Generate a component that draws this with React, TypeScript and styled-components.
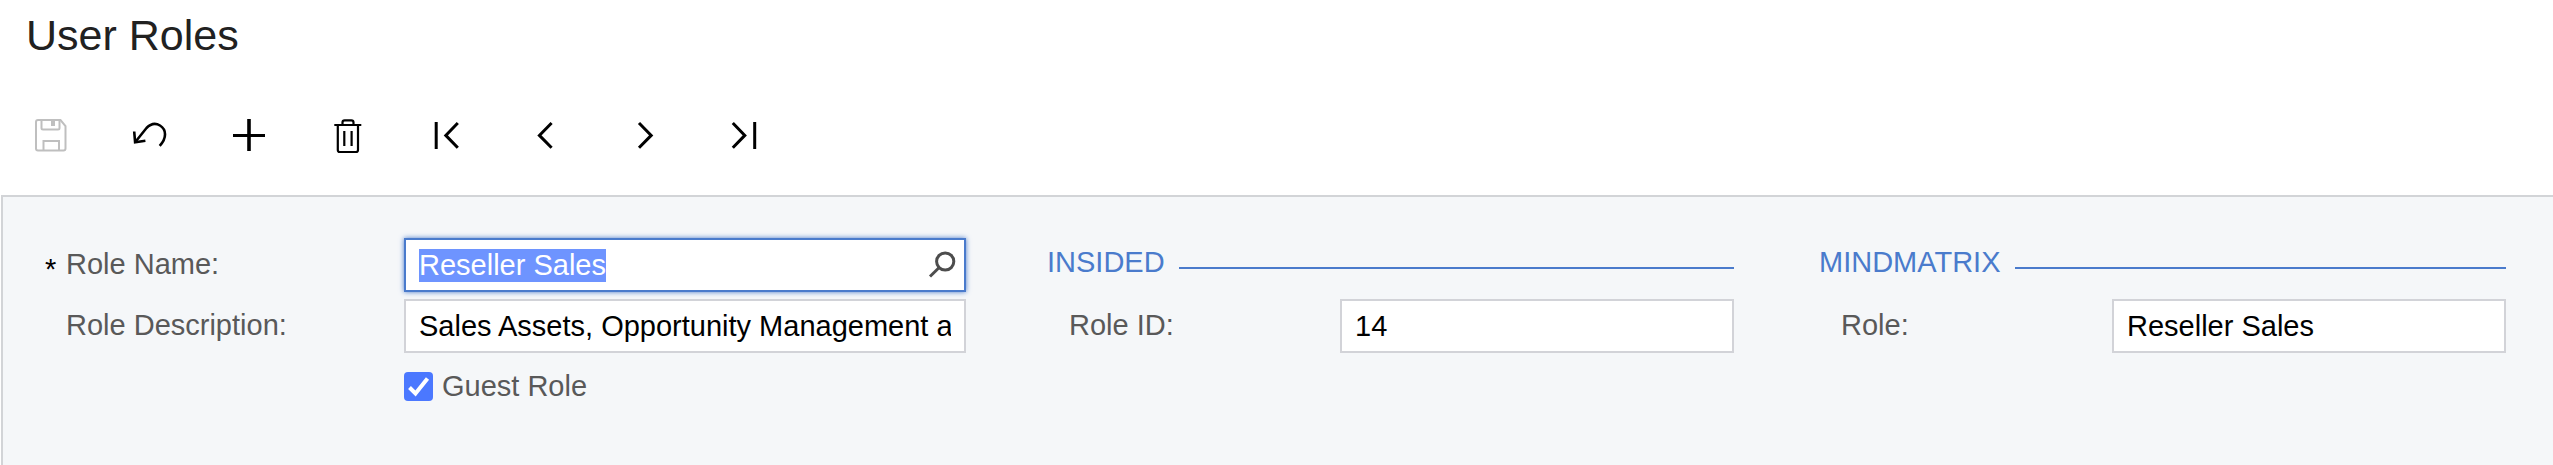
import React, { useEffect, useRef } from "react";
import styled, { createGlobalStyle, css } from "styled-components";

const GlobalStyle = createGlobalStyle`
  *, *::before, *::after { box-sizing: border-box; }
  body {
    margin: 0;
    background: #fff;
    font-family: "Liberation Sans", Arial, sans-serif;
    font-size: 29px;
    color: #595959;
  }
  input, button { font: inherit; }
`;

const Page = styled.main`
  display: flex;
  flex-direction: column;
  min-height: 100vh;
`;

const Title = styled.h1`
  margin: 0;
  padding: 11px 26px 0;
  font-size: 43px;
  line-height: 48px;
  font-weight: 400;
  color: #212121;
`;

const Toolbar = styled.div`
  display: flex;
  padding: 46px 2px 30px;
`;

const ToolButton = styled.button`
  display: flex;
  align-items: center;
  justify-content: center;
  width: 99px;
  height: 60px;
  padding: 0;
  border: 0;
  background: none;
  color: #000;

  &:disabled {
    color: #bfbfbf;
  }
`;

const ToolIcon = styled.svg`
  width: 39px;
  height: 40px;
  fill: none;
  stroke: currentColor;
  stroke-width: 3;
`;

const Form = styled.form`
  flex: 1;
  display: flex;
  align-items: flex-start;
  gap: 81px;
  margin-left: 1px;
  padding: 41px 47px 41px 42px;
  border: solid #d2d4d7;
  border-width: 2px 0 0 2px;
  background: #f5f7f9;
`;

const MainFields = styled.div`
  flex: 921 1 0;
  min-width: 0;
  display: flex;
  flex-direction: column;
  gap: 7px;
`;

const Groups = styled.div`
  flex: 1459 1 0;
  min-width: 0;
  display: flex;
  gap: 85px;
`;

const Group = styled.fieldset`
  flex: 1 1 0;
  min-width: 0;
  margin: 0;
  padding: 0;
  border: 0;
  display: flex;
  flex-direction: column;
  gap: 7px;
`;

const GroupTitle = styled.h2`
  display: flex;
  align-items: center;
  gap: 14px;
  height: 54px;
  margin: 0;
  padding-bottom: 6px;
  font-size: 29px;
  line-height: 48px;
  font-weight: 400;
  color: #4a7bcc;

  &::after {
    content: "";
    flex: 1;
    height: 2px;
    margin-top: 12px;
    background: #4a7bcc;
  }
`;

const Row = styled.div`
  display: flex;
  align-items: center;
  height: 54px;
`;

const Label = styled.label<{ $nested?: boolean }>`
  flex: none;
  display: flex;
  width: ${(p) => (p.$nested ? 293 : 359)}px;
  padding-left: ${(p) => (p.$nested ? 22 : 0)}px;
  padding-bottom: 2px;
  line-height: 34px;
`;

const Marker = styled.span`
  width: 21px;
  height: 34px;
  line-height: 44px;
  color: #000;
`;

const Field = styled.div<{ $lookup?: boolean }>`
  flex: 1;
  min-width: 0;
  display: flex;
  align-items: center;
  height: 54px;
  padding: 0 ${(p) => (p.$lookup ? 8 : 13)}px 0 13px;
  border: 2px solid #d2d3d8;
  background: #fff;

  ${(p) =>
    p.$lookup &&
    css`
      &:focus-within {
        border-color: #4a7bcc;
        box-shadow: 0 0 5px #4a7bcc;
      }
    `}
`;

const TextInput = styled.input`
  flex: 1;
  min-width: 0;
  padding: 0;
  border: 0;
  outline: 0;
  background: none;
  color: #000;

  &::selection {
    background: #6e94ff;
    color: #fff;
  }
`;

const LookupButton = styled.button`
  display: flex;
  padding: 0;
  border: 0;
  background: none;
  color: #4d4d4d;
`;

const CheckLabel = styled.label`
  display: flex;
  align-items: center;
  gap: 9px;
  height: 52px;
  margin-left: 359px;
  line-height: 34px;
`;

const CheckBox = styled.input`
  width: 29px;
  height: 29px;
  margin: 0;
  appearance: none;
  border-radius: 4px;
  border: 2px solid #d2d3d8;
  background: #fff;

  &:checked {
    border: 0;
    background: #4b78ff;
  }
`;

const CheckBoxWrap = styled.span`
  display: grid;

  & > * {
    grid-area: 1 / 1;
  }

  svg {
    pointer-events: none;
  }

  input:not(:checked) + svg {
    visibility: hidden;
  }
`;

const tools = [
  {
    name: "Save",
    disabled: true,
    icon: (
      <g strokeWidth="2">
        <path d="M6 5h22.5l5 6v22.5q0 2-2 2H6q-2 0-2-2V7q0-2 2-2z" />
        <path d="M9.5 5v8q0 1.500 1.500 1.500h15q1.500 0 1.500-1.500V5M11.500 35v-9h15.500v9" />
        <path d="M19 5h4v6h-4z" fill="currentColor" stroke="none" />
      </g>
    ),
  },
  {
    name: "Undo",
    icon: (
      <g strokeWidth="2.600">
        <path d="M3.200 16.500l.900 10.700 10.300-1.500" />
        <path d="M4.100 27.200L15.500 13C19 9.400 24 7.400 29 10.500c6.500 4 7 12.500-.3 20.300" />
      </g>
    ),
  },
  {
    name: "Add",
    icon: (
      <>
        <path d="M3 20.500h32" />
        <path d="M19 4v32" strokeWidth="3.600" />
      </>
    ),
  },
  {
    name: "Delete",
    icon: (
      <g strokeWidth="2.200">
        <path d="M5.300 10h27M13.500 10V7.500q0-2.200 2.200-2.200h6.600q2.200 0 2.200 2.200V10" />
        <path d="M8.800 10v25q0 2 2 2H27q2 0 2-2V10M15.300 16v15M22.600 16v15" />
      </g>
    ),
  },
  { name: "First record", icon: <path d="M8.200 7v27M29.800 8L17.800 20.400l12 12.400" /> },
  { name: "Previous record", icon: <path d="M24.600 8l-12.200 12.400 12.200 12.400" /> },
  { name: "Next record", icon: <path d="M13 8l12.200 12.400L13 32.800" /> },
  { name: "Last record", icon: <path d="M7.800 8l12 12.400-12 12.400M29.700 7v27" /> },
];

export default function App() {
  const nameRef = useRef<HTMLInputElement>(null);

  useEffect(() => {
    nameRef.current?.focus();
    nameRef.current?.select();
  }, []);

  return (
    <Page>
      <GlobalStyle />
      <Title>User Roles</Title>
      <Toolbar role="toolbar" aria-label="Record actions">
        {tools.map((tool) => (
          <ToolButton key={tool.name} type="button" aria-label={tool.name} disabled={tool.disabled}>
            <ToolIcon viewBox="0 0 39 40">{tool.icon}</ToolIcon>
          </ToolButton>
        ))}
      </Toolbar>
      <Form onSubmit={(e) => e.preventDefault()}>
        <MainFields>
          <Row>
            <Label htmlFor="role-name">
              <Marker>*</Marker>Role Name:
            </Label>
            <Field $lookup>
              <TextInput id="role-name" ref={nameRef} defaultValue="Reseller Sales" required spellCheck={false} />
              <LookupButton type="button" aria-label="Look up role">
                <svg width="28" height="28" viewBox="0 0 28 28" fill="none" stroke="currentColor" strokeWidth="3">
                  <circle cx="17.200" cy="10.500" r="8.600" />
                  <path d="M11.200 16.500L2 25.500" />
                </svg>
              </LookupButton>
            </Field>
          </Row>
          <Row>
            <Label htmlFor="role-description">
              <Marker />
              Role Description:
            </Label>
            <Field>
              <TextInput
                id="role-description"
                defaultValue="Sales Assets, Opportunity Management a"
                spellCheck={false}
              />
            </Field>
          </Row>
          <CheckLabel>
            <CheckBoxWrap>
              <CheckBox type="checkbox" defaultChecked />
              <svg width="29" height="29" viewBox="0 0 29 29" fill="none" stroke="#fff" strokeWidth="4">
                <path d="M5.500 15.500l6 6L23.500 6.500" />
              </svg>
            </CheckBoxWrap>
            Guest Role
          </CheckLabel>
        </MainFields>
        <Groups>
          <Group aria-label="Insided">
            <GroupTitle>INSIDED</GroupTitle>
            <Row>
              <Label $nested htmlFor="insided-role">Role ID:</Label>
              <Field>
                <TextInput id="insided-role" defaultValue="14" />
              </Field>
            </Row>
          </Group>
          <Group aria-label="Mindmatrix">
            <GroupTitle>MINDMATRIX</GroupTitle>
            <Row>
              <Label $nested htmlFor="mindmatrix-role">Role:</Label>
              <Field>
                <TextInput id="mindmatrix-role" defaultValue="Reseller Sales" spellCheck={false} />
              </Field>
            </Row>
          </Group>
        </Groups>
      </Form>
    </Page>
  );
}
